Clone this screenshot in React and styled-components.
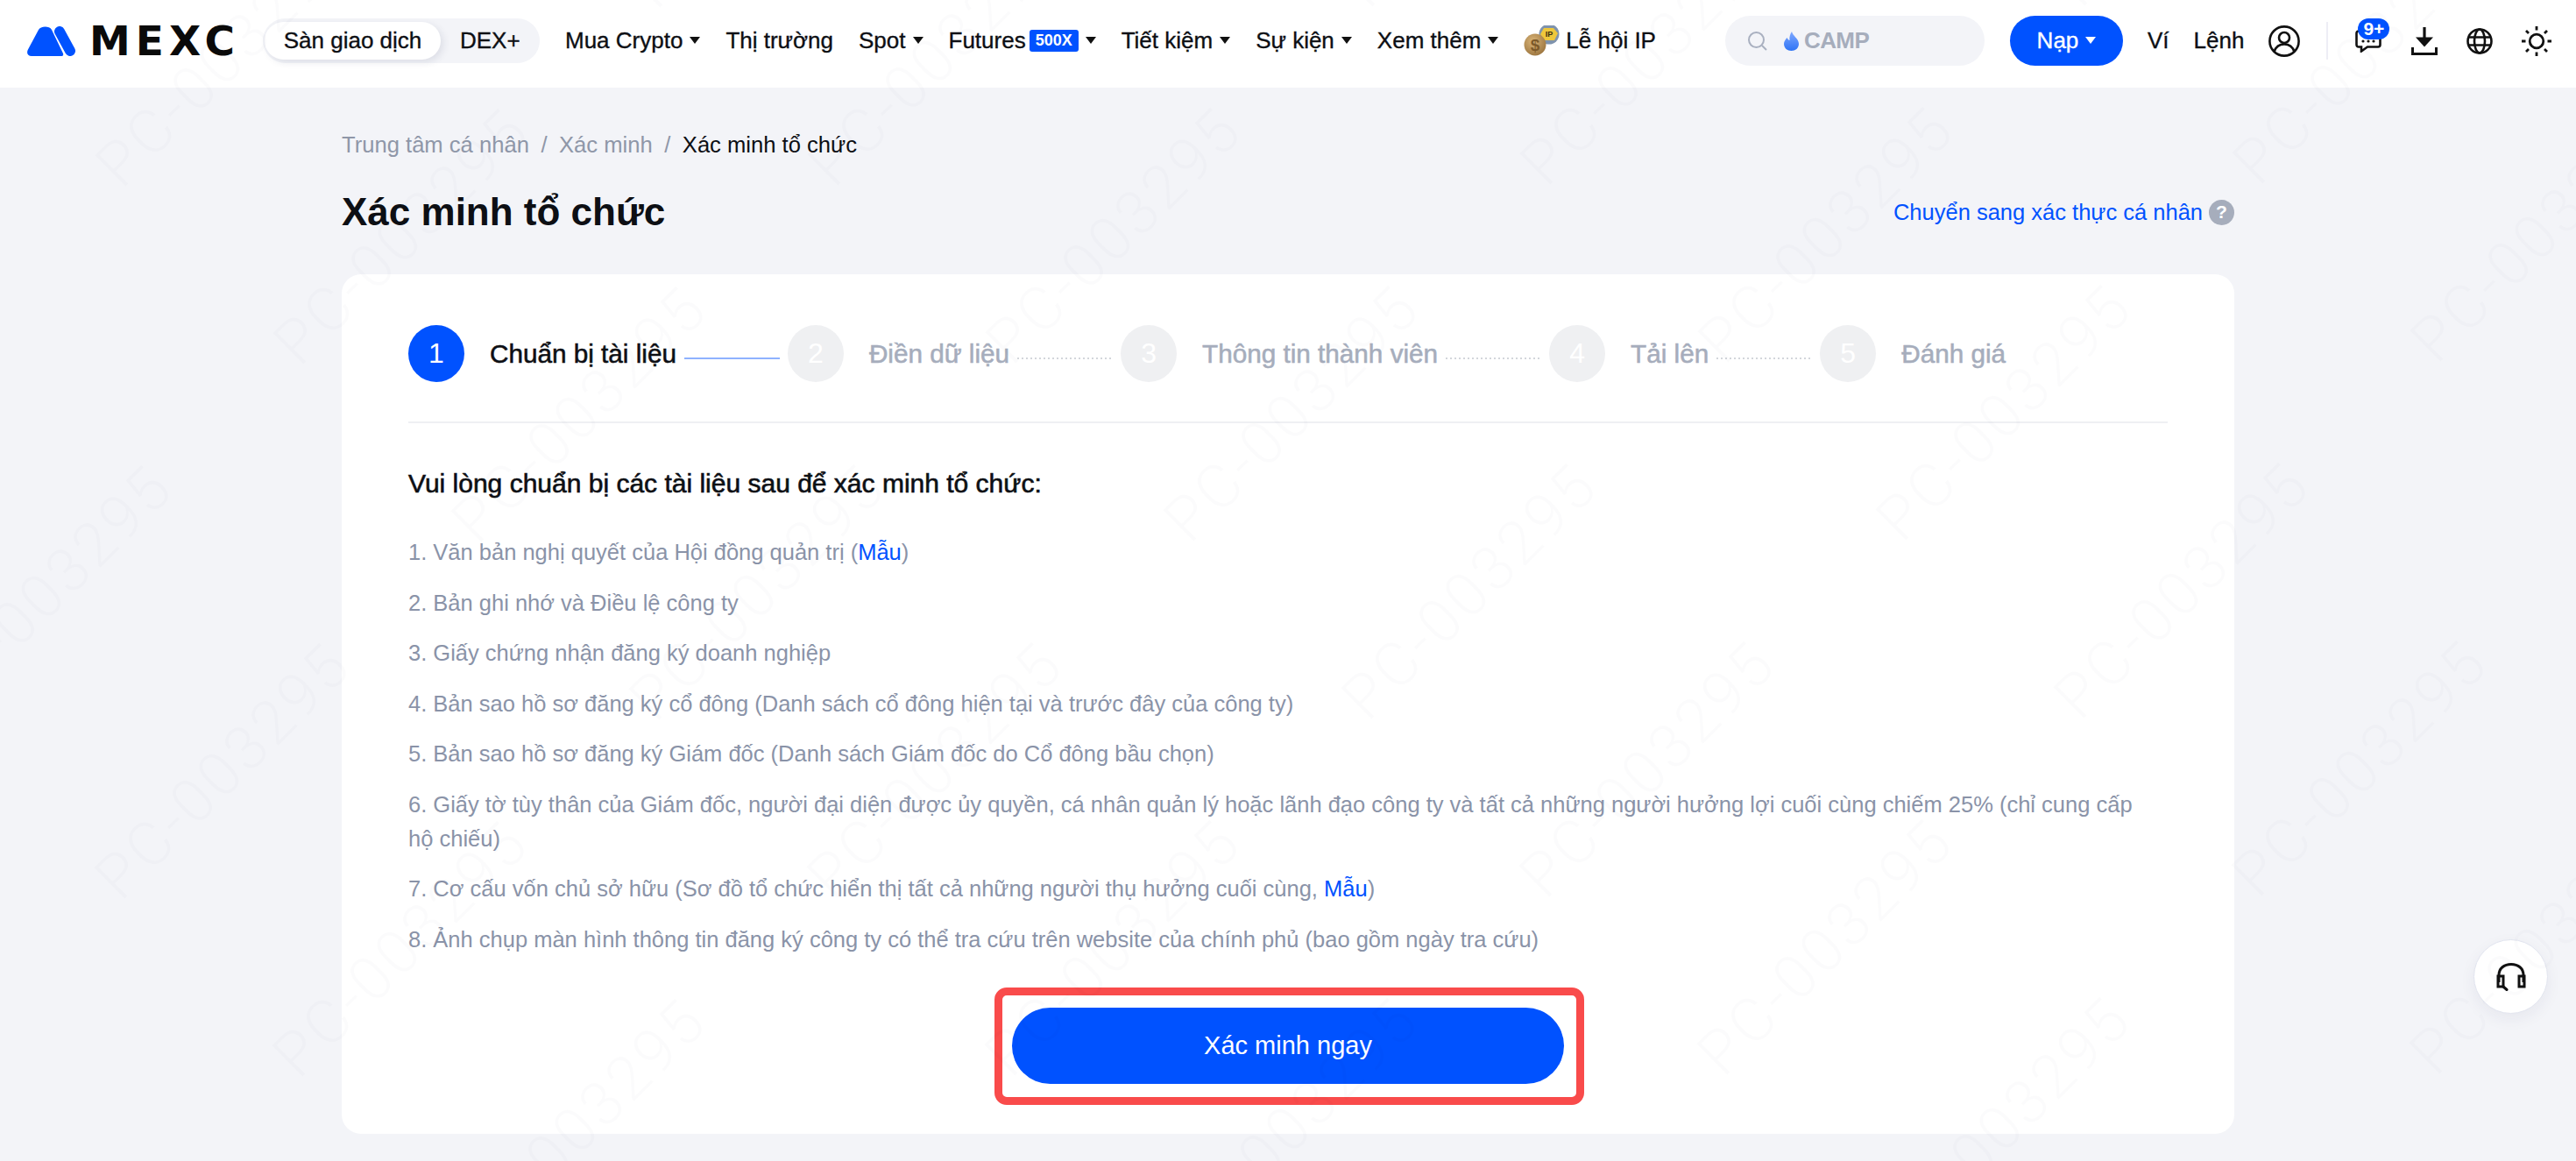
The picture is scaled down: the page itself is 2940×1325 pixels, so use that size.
import React from "react";
import styled, { createGlobalStyle, css } from "styled-components";

const BLUE = "#0052ff";
const INK = "#0d0f14";
const MUTED = "#a6adbc";

const medium = css`
  -webkit-text-stroke: 0.35px currentColor;
`;

const GlobalStyle = createGlobalStyle`
  html, body {
    margin: 0;
    padding: 0;
    height: 100%;
    overflow: hidden;
    background: #f3f4f8;
    color: ${INK};
    font-family: "Liberation Sans", Arial, sans-serif;
  }
  * { box-sizing: border-box; }
`;

const Header = styled.header`
  display: flex;
  align-items: center;
  height: 100px;
  padding: 0 0 7px 31px;
  background: #fff;
  font-size: 26px;
`;

const Logo = styled.div`
  display: flex;
  align-items: center;
  gap: 16px;
  width: 269px;
  flex: none;
`;

const LogoWord = styled.span`
  font-family: "DejaVu Sans", sans-serif;
  font-size: 47px;
  line-height: 34px;
  font-weight: 700;
  letter-spacing: 6px;
  color: #0a0a0a;
`;

const Switcher = styled.div`
  display: flex;
  align-items: center;
  width: 316px;
  height: 51px;
  margin-right: 29px;
  padding-left: 2px;
  border-radius: 26px;
  background: #f3f4f8;
`;

const SwitchTab = styled.div`
  ${medium}
  display: flex;
  align-items: center;
  justify-content: center;
  height: 43px;
  border-radius: 22px;
  width: ${(p) => (p.$on ? "201px" : "auto")};
  margin-left: ${(p) => (p.$on ? "0" : "22px")};
  background: ${(p) => (p.$on ? "#fff" : "transparent")};
  box-shadow: ${(p) => (p.$on ? "3px 3px 8px rgba(30, 40, 80, 0.1)" : "none")};
`;

const Nav = styled.nav`
  display: flex;
  align-items: center;
  gap: 29px;
`;

const NavItem = styled.div`
  ${medium}
  display: flex;
  align-items: center;
  gap: ${(p) => p.$gap || 8}px;
  white-space: nowrap;
`;

const Caret = styled.i`
  display: block;
  width: 0;
  height: 0;
  margin-top: -2px;
  border-left: 6px solid transparent;
  border-right: 6px solid transparent;
  border-top: 8px solid ${(p) => p.$color || "#111"};
`;

const HotBadge = styled.span`
  display: flex;
  align-items: center;
  justify-content: center;
  width: 56px;
  height: 25px;
  margin-left: -4px;
  border-radius: 3px;
  background: ${BLUE};
  color: #fff;
  font-size: 18px;
  font-weight: 700;
  -webkit-text-stroke: 0;
`;

const Tools = styled.div`
  display: flex;
  align-items: center;
  margin-left: 79px;
`;

const Search = styled.div`
  display: flex;
  align-items: center;
  width: 296px;
  height: 57px;
  padding-left: 25px;
  border-radius: 29px;
  background: #f3f4f8;
  color: ${MUTED};
  font-weight: 700;
  letter-spacing: -0.6px;
`;

const SearchIcon = styled.svg`
  margin-right: 18px;
`;

const DepositButton = styled.button`
  ${medium}
  display: flex;
  align-items: center;
  justify-content: center;
  gap: 8px;
  width: 129px;
  height: 57px;
  margin-left: 29px;
  border: 0;
  border-radius: 29px;
  background: ${BLUE};
  color: #fff;
  font: inherit;
`;

const ToolLink = styled.span`
  ${medium}
  margin-left: ${(p) => p.$left}px;
`;

const IconSlot = styled.span`
  position: relative;
  display: flex;
  flex: none;
  margin-left: ${(p) => p.$left}px;
`;

const Divider = styled.span`
  width: 2px;
  height: 43px;
  margin-left: 30px;
  background: #eeeef5;
`;

const CountBadge = styled.span`
  position: absolute;
  left: 3px;
  top: -13px;
  display: flex;
  align-items: center;
  justify-content: center;
  width: 36px;
  height: 24px;
  border-radius: 12px;
  background: ${BLUE};
  color: #fff;
  font-size: 21px;
  font-weight: 700;
`;

const Main = styled.main`
  width: 2160px;
  margin: 0 auto;
  padding-top: 47px;
`;

const Crumbs = styled.div`
  display: flex;
  gap: 13.5px;
  font-size: 25.6px;
  line-height: 36px;
  color: #8f97a8;
`;

const CrumbNow = styled.span`
  color: ${INK};
`;

const TitleRow = styled.div`
  display: flex;
  align-items: center;
  justify-content: space-between;
  height: 60px;
  margin-top: 29px;
  margin-bottom: 41px;
`;

const Title = styled.h1`
  margin: 0;
  font-size: 44px;
  line-height: 60px;
  font-weight: 700;
  color: ${INK};
`;

const SwitchLink = styled.a`
  display: flex;
  align-items: center;
  gap: 7px;
  font-size: 25.5px;
  color: ${BLUE};
`;

const Help = styled.span`
  display: flex;
  align-items: center;
  justify-content: center;
  width: 29px;
  height: 29px;
  border-radius: 50%;
  background: ${MUTED};
  color: #fff;
  font-size: 21px;
  font-weight: 700;
`;

const Card = styled.section`
  padding: 58px 76px 33px;
  border-radius: 22px;
  background: #fff;
`;

const Stepper = styled.ol`
  display: flex;
  align-items: center;
  margin: 0;
  padding: 0 0 45px;
  list-style: none;
  border-bottom: 2px solid #eff0f3;
`;

const StepNumber = styled.span`
  display: flex;
  align-items: center;
  justify-content: center;
  flex: none;
  width: 64px;
  height: 65px;
  margin-right: 29px;
  border-radius: 50%;
  background: ${(p) => (p.$active ? BLUE : "#eff0f2")};
  color: #fff;
  font-size: 32px;
`;

const StepLabel = styled.span`
  -webkit-text-stroke: 0.55px currentColor;
  font-size: 29.7px;
  white-space: nowrap;
  color: ${(p) => (p.$active ? INK : MUTED)};
`;

const StepLine = styled.span`
  flex: none;
  width: 109px;
  height: 2px;
  margin: 10px 9px 0;
  background: ${(p) =>
    p.$active
      ? "#8fb2ff"
      : "repeating-linear-gradient(90deg, #d3d6db 0 2px, transparent 2px 5px)"};
`;

const Lead = styled.h2`
  -webkit-text-stroke: 0.6px currentColor;
  margin: 49px 0 39px;
  font-size: 30px;
  line-height: 40px;
  font-weight: 400;
  color: ${INK};
`;

const DocList = styled.ol`
  display: flex;
  flex-direction: column;
  gap: 18.5px;
  margin: 0;
  padding: 0 20px 0 0;
  list-style: none;
  font-size: 25.5px;
  line-height: 39px;
  color: #8a93a8;
`;

const SampleLink = styled.a`
  color: ${BLUE};
`;

const Actions = styled.div`
  display: flex;
  justify-content: center;
  margin-top: 35px;
`;

const Highlight = styled.div`
  margin-left: 3px;
  padding: 14px 14px 15px 11px;
  border: 9px solid #f94b4b;
  border-radius: 14px;
`;

const VerifyButton = styled.button`
  display: block;
  width: 630px;
  height: 87px;
  border: 0;
  border-radius: 44px;
  background: ${BLUE};
  color: #fff;
  font-family: inherit;
  font-size: 29px;
`;

const SupportButton = styled.button`
  position: fixed;
  left: 2823px;
  top: 1072px;
  display: flex;
  align-items: center;
  justify-content: center;
  width: 85px;
  height: 85px;
  padding: 0;
  border: 1px solid #e1e4ee;
  border-radius: 50%;
  background: #fff;
  box-shadow: 0 6px 18px rgba(30, 40, 80, 0.06);
`;

const Watermarks = styled.div`
  position: fixed;
  inset: 0;
  z-index: 10;
  overflow: hidden;
  pointer-events: none;
`;

const Mark = styled.span`
  position: absolute;
  font-family: Roboto, "Liberation Sans", sans-serif;
  font-size: 70px;
  font-weight: 300;
  line-height: 70px;
  letter-spacing: 4px;
  white-space: nowrap;
  color: rgba(20, 30, 60, 0.014);
  transform-origin: 0 56px;
  transform: rotate(-45deg);
`;

const BrandMark = () => (
  <svg width="55" height="34" viewBox="0 0 55 34">
    <path
      d="M13 4 C15 0 25 -1 28 4 L41 31 C41.5 33 41 34 39 34 L5 34 C1 34 -1 31 0.7 27 Z"
      fill={BLUE}
    />
    <path d="M37 6 L49 28" stroke={BLUE} strokeWidth="12" strokeLinecap="round" />
  </svg>
);

const Coins = () => (
  <svg width="42" height="36" viewBox="0 0 42 36">
    <defs>
      <radialGradient id="goldCoin" cx="40%" cy="35%" r="75%">
        <stop offset="0" stopColor="#d9b478" />
        <stop offset="1" stopColor="#97703a" />
      </radialGradient>
    </defs>
    <circle cx="29" cy="10" r="11.5" fill="#7f93ad" />
    <path d="M23 3 H34 L39 9 L35 17 H23 L19 10 Z" fill="#eec73c" />
    <text x="29" y="13" fontSize="9" fontWeight="700" textAnchor="middle" fill="#3a2f10">
      IP
    </text>
    <circle cx="13" cy="22" r="12.5" fill="url(#goldCoin)" />
    <text x="13" y="29" fontSize="19" fontWeight="700" textAnchor="middle" fill="#7d5a2a">
      $
    </text>
  </svg>
);

const Flame = () => (
  <svg width="17" height="22" viewBox="0 0 17 22" style={{ marginRight: 6 }}>
    <defs>
      <linearGradient id="flame" x1="0" y1="0" x2="0" y2="1">
        <stop offset="0" stopColor="#7fa8ff" />
        <stop offset="1" stopColor="#2f74f5" />
      </linearGradient>
    </defs>
    <path
      d="M9 0 C10 5 17 8 17 14 C17 19 13 22 8.500 22 C4 22 0 19 0 14 C0 11 2 9 3.500 7 C4.500 9 5.500 10 6.500 10 C6 6 7 3 9 0 Z"
      fill="url(#flame)"
    />
  </svg>
);

const UserIcon = () => (
  <svg width="36" height="36" viewBox="0 0 36 36" fill="none" stroke="#111" strokeWidth="2.6">
    <circle cx="18" cy="18" r="16.600" />
    <circle cx="18" cy="14" r="6" />
    <path d="M6.500 30 C8.500 24 13 21.500 18 21.500 C23 21.500 27.500 24 29.500 30" />
  </svg>
);

const ChatIcon = () => (
  <svg width="30" height="26" viewBox="0 0 30 26" fill="none">
    <path
      d="M4 1.500 H26 C27.500 1.500 28.500 2.500 28.500 4 V17 C28.500 18.500 27.500 19.500 26 19.500 H14 L7 24.500 V19.500 H4 C2.500 19.500 1.500 18.500 1.500 17 V4 C1.500 2.500 2.500 1.500 4 1.500 Z"
      stroke="#111"
      strokeWidth="2.600"
    />
    <circle cx="9" cy="13" r="1.600" fill="#111" />
    <circle cx="15" cy="13" r="1.600" fill="#111" />
    <circle cx="21" cy="13" r="1.600" fill="#111" />
  </svg>
);

const DownloadIcon = () => (
  <svg width="30" height="32" viewBox="0 0 30 32" fill="none">
    <path d="M15 0 V14" stroke="#111" strokeWidth="3.200" />
    <path d="M5 11.500 H25 L15 22.500 Z" fill="#111" />
    <path d="M1.500 23 V30.500 H28.500 V23" stroke="#111" strokeWidth="3" />
  </svg>
);

const GlobeIcon = () => (
  <svg width="30" height="30" viewBox="0 0 30 30" fill="none" stroke="#111" strokeWidth="2.600">
    <circle cx="15" cy="15" r="13.500" />
    <ellipse cx="15" cy="15" rx="6" ry="13.500" />
    <path d="M2.500 10.500 H27.500 M2.500 19.500 H27.500" />
  </svg>
);

const SunIcon = () => (
  <svg width="34" height="34" viewBox="0 0 34 34" fill="none" stroke="#111" strokeWidth="2.800">
    <circle cx="17" cy="17" r="7.800" />
    <path d="M17 0 V4.500 M17 29.500 V34 M0 17 H4.500 M29.500 17 H34" />
    <path d="M5 5 L8 8 M26 26 L29 29 M5 29 L8 26 M26 8 L29 5" />
  </svg>
);

const HeadsetIcon = () => (
  <svg width="34" height="32" viewBox="0 0 34 32" fill="none" stroke="#111" strokeWidth="3">
    <path d="M3 22 V14 C3 6 9 1.500 17 1.500 C25 1.500 31 6 31 14 V22" />
    <path d="M2 15 H8 V27 H2 Z M26 15 H32 V27 H26 Z" />
    <path d="M8 27 L12 30.500" strokeLinecap="round" />
  </svg>
);

const steps = [
  "Chuẩn bị tài liệu",
  "Điền dữ liệu",
  "Thông tin thành viên",
  "Tải lên",
  "Đánh giá",
];

const navItems = [
  { label: "Mua Crypto", caret: true },
  { label: "Thị trường" },
  { label: "Spot", caret: true },
  { label: "Futures", badge: "500X", caret: true },
  { label: "Tiết kiệm", caret: true },
  { label: "Sự kiện", caret: true },
  { label: "Xem thêm", caret: true },
];

// watermark lattice: one step is (203, 203), the other (407, -407)
const marks = [];
for (let a = -8; a < 22; a++) {
  for (let b = -10; b < 10; b++) {
    const x = 137 + a * 203 + b * 407;
    const y = 215 + a * 203 - b * 407;
    if (x > -320 && x < 2960 && y > -20 && y < 1640) marks.push({ x, y });
  }
}

const App = () => {
  return (
    <>
      <GlobalStyle />
      <Header>
        <Logo>
          <BrandMark />
          <LogoWord>MEXC</LogoWord>
        </Logo>
        <Switcher>
          <SwitchTab $on>Sàn giao dịch</SwitchTab>
          <SwitchTab>DEX+</SwitchTab>
        </Switcher>
        <Nav>
          {navItems.map((item) => (
            <NavItem key={item.label}>
              {item.label}
              {item.badge && <HotBadge>{item.badge}</HotBadge>}
              {item.caret && <Caret />}
            </NavItem>
          ))}
          <NavItem $gap={6}>
            <Coins />
            Lễ hội IP
          </NavItem>
        </Nav>
        <Tools>
          <Search>
            <SearchIcon width="24" height="24" viewBox="0 0 24 24" fill="none" stroke="#a9b0c0" strokeWidth="2">
              <circle cx="10.500" cy="10.500" r="8.500" />
              <path d="M17 17 L22 22" />
            </SearchIcon>
            <Flame />
            CAMP
          </Search>
          <DepositButton>
            Nạp
            <Caret $color="#fff" />
          </DepositButton>
          <ToolLink $left={28}>Ví</ToolLink>
          <ToolLink $left={28}>Lệnh</ToolLink>
          <IconSlot $left={28}>
            <UserIcon />
          </IconSlot>
          <Divider />
          <IconSlot $left={31}>
            <ChatIcon />
            <CountBadge>9+</CountBadge>
          </IconSlot>
          <IconSlot $left={34}>
            <DownloadIcon />
          </IconSlot>
          <IconSlot $left={33}>
            <GlobeIcon />
          </IconSlot>
          <IconSlot $left={33}>
            <SunIcon />
          </IconSlot>
        </Tools>
      </Header>

      <Main>
        <Crumbs>
          <span>Trung tâm cá nhân</span>
          <span>/</span>
          <span>Xác minh</span>
          <span>/</span>
          <CrumbNow>Xác minh tổ chức</CrumbNow>
        </Crumbs>
        <TitleRow>
          <Title>Xác minh tổ chức</Title>
          <SwitchLink>
            Chuyển sang xác thực cá nhân
            <Help>?</Help>
          </SwitchLink>
        </TitleRow>
        <Card>
          <Stepper>
            {steps.map((step, index) => (
              <React.Fragment key={step}>
                <StepNumber $active={index === 0}>{index + 1}</StepNumber>
                <StepLabel $active={index === 0}>{step}</StepLabel>
                {index < steps.length - 1 && <StepLine $active={index === 0} />}
              </React.Fragment>
            ))}
          </Stepper>
          <Lead>Vui lòng chuẩn bị các tài liệu sau để xác minh tổ chức:</Lead>
          <DocList>
            <li>
              1. Văn bản nghị quyết của Hội đồng quản trị (<SampleLink>Mẫu</SampleLink>)
            </li>
            <li>2. Bản ghi nhớ và Điều lệ công ty</li>
            <li>3. Giấy chứng nhận đăng ký doanh nghiệp</li>
            <li>4. Bản sao hồ sơ đăng ký cổ đông (Danh sách cổ đông hiện tại và trước đây của công ty)</li>
            <li>5. Bản sao hồ sơ đăng ký Giám đốc (Danh sách Giám đốc do Cổ đông bầu chọn)</li>
            <li>
              6. Giấy tờ tùy thân của Giám đốc, người đại diện được ủy quyền, cá nhân quản lý hoặc lãnh đạo công ty và tất cả những người hưởng lợi cuối cùng chiếm 25% (chỉ cung cấp hộ chiếu)
            </li>
            <li>
              7. Cơ cấu vốn chủ sở hữu (Sơ đồ tổ chức hiển thị tất cả những người thụ hưởng cuối cùng, <SampleLink>Mẫu</SampleLink>)
            </li>
            <li>8. Ảnh chụp màn hình thông tin đăng ký công ty có thể tra cứu trên website của chính phủ (bao gồm ngày tra cứu)</li>
          </DocList>
          <Actions>
            <Highlight>
              <VerifyButton>Xác minh ngay</VerifyButton>
            </Highlight>
          </Actions>
        </Card>
      </Main>

      <SupportButton>
        <HeadsetIcon />
      </SupportButton>

      <Watermarks>
        {marks.map((m) => (
          <Mark key={`${m.x}-${m.y}`} style={{ left: m.x, top: m.y - 56 }}>
            PC-003295
          </Mark>
        ))}
      </Watermarks>
    </>
  );
};

export default App;
